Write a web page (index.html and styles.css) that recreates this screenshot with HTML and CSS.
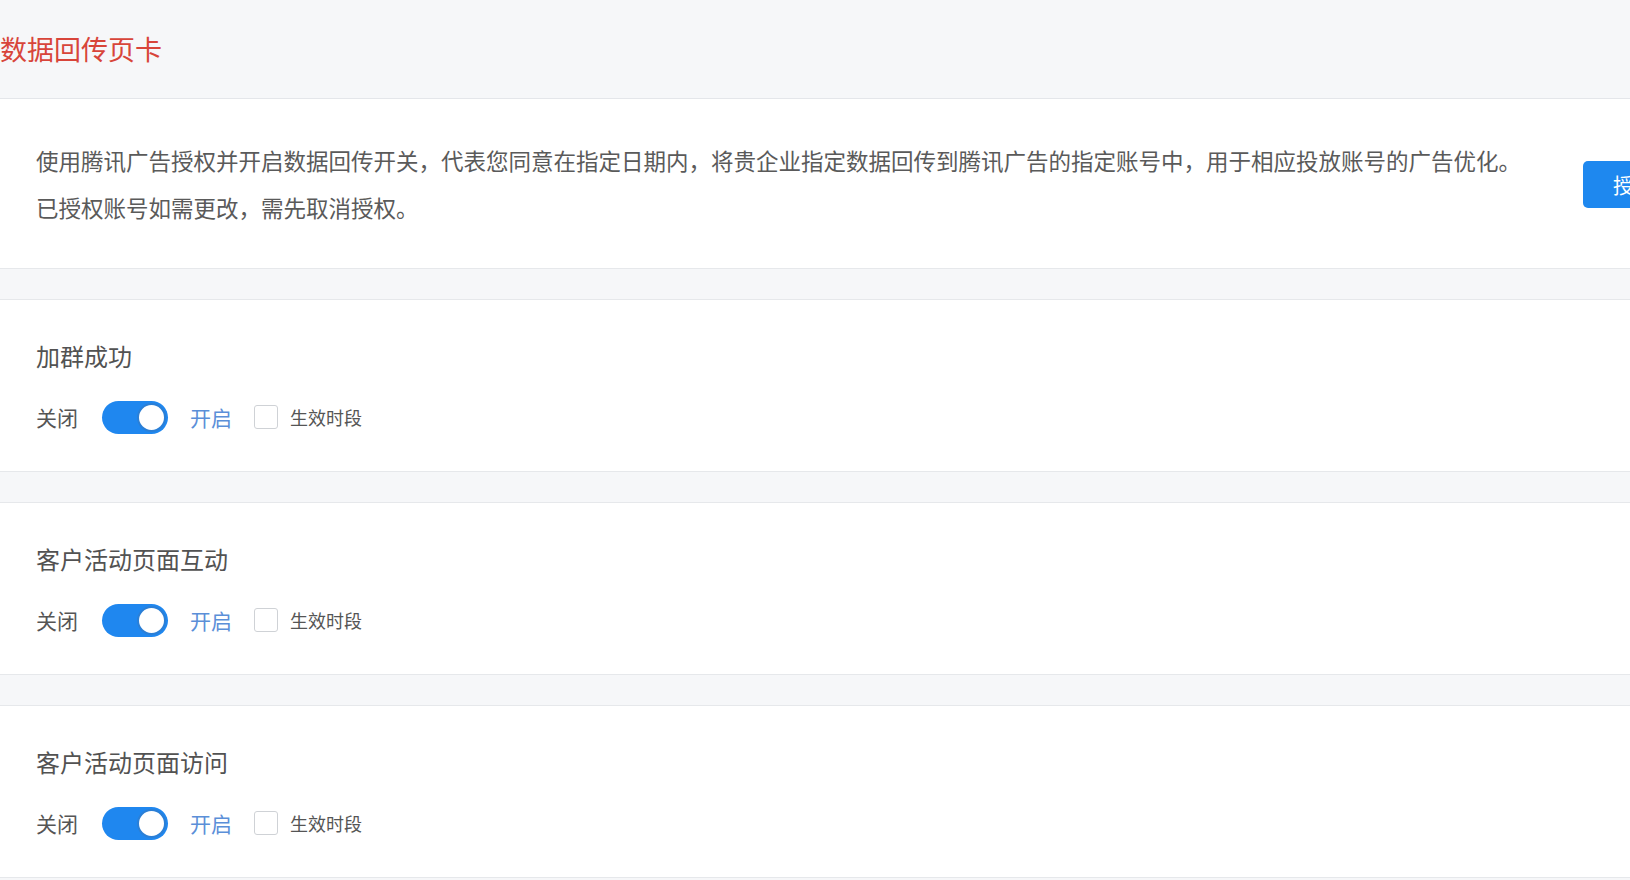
FILE: index.html
```html
<!DOCTYPE html>
<html lang="zh-CN">
<head>
    <meta charset="UTF-8">
    <meta name="viewport" content="width=device-width, initial-scale=1.0">
    <title>数据回传页卡</title>
    <link rel="stylesheet" href="styles.css">
</head>
<body>
    <div class="page-header">
        <h1 class="page-title">数据回传页卡</h1>
    </div>

    <div class="desc-card">
        <div class="desc-text">
            <p>使用腾讯广告授权并开启数据回传开关，代表您同意在指定日期内，将贵企业指定数据回传到腾讯广告的指定账号中，用于相应投放账号的广告优化。</p>
            <p>已授权账号如需更改，需先取消授权。</p>
        </div>
        <button class="auth-btn">授权</button>
    </div>

    <div class="event-card">
        <div class="event-title">加群成功</div>
        <div class="event-row">
            <span class="label-off">关闭</span>
            <span class="switch on"><span class="switch-knob"></span></span>
            <span class="label-on">开启</span>
            <span class="checkbox"></span>
            <span class="check-label">生效时段</span>
        </div>
    </div>

    <div class="event-card">
        <div class="event-title">客户活动页面互动</div>
        <div class="event-row">
            <span class="label-off">关闭</span>
            <span class="switch on"><span class="switch-knob"></span></span>
            <span class="label-on">开启</span>
            <span class="checkbox"></span>
            <span class="check-label">生效时段</span>
        </div>
    </div>

    <div class="event-card">
        <div class="event-title">客户活动页面访问</div>
        <div class="event-row">
            <span class="label-off">关闭</span>
            <span class="switch on"><span class="switch-knob"></span></span>
            <span class="label-on">开启</span>
            <span class="checkbox"></span>
            <span class="check-label">生效时段</span>
        </div>
    </div>
</body>
</html>
```

FILE: styles.css
```css
body {
    margin: 0;
    background: #f6f7f9;
    font-family: "Noto Sans CJK SC", "Noto Sans", sans-serif;
    color: #555;
    overflow: hidden;
}
.page-header {
    height: 98px;
    display: flex;
    align-items: center;
    border-bottom: 1px solid #e4e6ea;
}
.page-title {
    margin: 0;
    font-size: 27px;
    font-weight: normal;
    color: #d8453a;
    line-height: 32px;
}
.desc-card {
    display: flex;
    align-items: center;
    background: white;
    padding: 38px 0 37px 36px;
    border-bottom: 1px solid #e6e8eb;
    overflow: hidden;
}
.desc-text p {
    margin: 0;
    font-size: 22.5px;
    line-height: 47px;
    white-space: nowrap;
    color: #5a5a5a;
}
.auth-btn {
    margin-left: auto;
    margin-right: -55px;
    flex-shrink: 0;
    height: 47px;
    padding: 0 30px;
    border: none;
    border-radius: 5px;
    background: #1e88ef;
    color: white;
    font-family: inherit;
    font-size: 21px;
    white-space: nowrap;
}
.event-card {
    background: white;
    margin-top: 30px;
    padding: 42px 0 36px 36px;
    border-top: 1px solid #e6e8eb;
    border-bottom: 1px solid #e6e8eb;
}
.event-title {
    font-size: 24px;
    line-height: 28px;
    color: #525252;
}
.event-row {
    display: flex;
    align-items: center;
    height: 36px;
    margin-top: 29px;
}
.label-off {
    font-size: 21px;
    color: #555;
    margin-right: 24px;
}
.switch {
    position: relative;
    width: 66px;
    height: 33px;
    border-radius: 17px;
    background: #1f87ef;
    margin-right: 22px;
}
.switch-knob {
    position: absolute;
    top: 2px;
    right: 2px;
    width: 25px;
    height: 25px;
    border-radius: 50%;
    background: white;
    border: 2px solid #2b7fd6;
}
.label-on {
    font-size: 21px;
    color: #5b8fd8;
    margin-right: 22px;
}
.checkbox {
    width: 22px;
    height: 22px;
    border: 1px solid #cfd2d6;
    border-radius: 3px;
    background: white;
    margin-right: 12px;
}
.check-label {
    font-size: 18px;
    color: #555;
}
```
